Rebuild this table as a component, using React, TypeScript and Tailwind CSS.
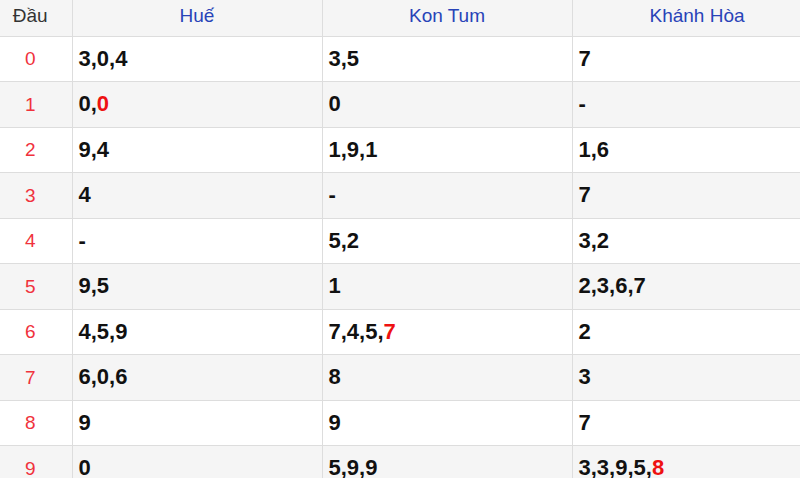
const rows: { head: string; cells: [string, string | null][] }[] = [
  { head: "0", cells: [["3,0,4", null], ["3,5", null], ["7", null]] },
  { head: "1", cells: [["0,", "0"], ["0", null], ["-", null]] },
  { head: "2", cells: [["9,4", null], ["1,9,1", null], ["1,6", null]] },
  { head: "3", cells: [["4", null], ["-", null], ["7", null]] },
  { head: "4", cells: [["-", null], ["5,2", null], ["3,2", null]] },
  { head: "5", cells: [["9,5", null], ["1", null], ["2,3,6,7", null]] },
  { head: "6", cells: [["4,5,9", null], ["7,4,5,", "7"], ["2", null]] },
  { head: "7", cells: [["6,0,6", null], ["8", null], ["3", null]] },
  { head: "8", cells: [["9", null], ["9", null], ["7", null]] },
  { head: "9", cells: [["0", null], ["5,9,9", null], ["3,3,9,5,", "8"]] },
];

const provinces = ["Huế", "Kon Tum", "Khánh Hòa"];

export default function App() {
  return (
    <div className="w-[800px] h-[478px] overflow-hidden bg-white font-['Liberation_Sans',Arial,sans-serif]">
      <table className="w-[822px] border-collapse table-fixed">
        <colgroup>
          <col className="w-[72px]" />
          <col className="w-[250px]" />
          <col className="w-[250px]" />
          <col className="w-[250px]" />
        </colgroup>
        <thead>
          <tr className="h-[36px] bg-[#f5f5f5]">
            <th className="border-r border-b border-[#dddddd] text-[19px] leading-none font-normal text-[#333] text-center pr-[11px] pb-[5px]">
              Đầu
            </th>
            {provinces.map((p) => (
              <th
                key={p}
                className="border-x border-b border-[#dddddd] text-[19px] leading-none font-normal text-[#2843b8] text-center pb-[5px]"
              >
                {p}
              </th>
            ))}
          </tr>
        </thead>
        <tbody>
          {rows.map((r, i) => (
            <tr
              key={r.head}
              className={
                (i % 2 === 1 ? "bg-[#f5f5f5] " : "bg-white ") +
                (i % 2 === 0 ? "h-[45px]" : "h-[46px]")
              }
            >
              <td className="border-r border-b border-[#dddddd] text-center pr-[11px] text-[19px] leading-none text-[#f0323c]">
                {r.head}
              </td>
              {r.cells.map(([txt, red], j) => (
                <td
                  key={j}
                  className="border-x border-b border-[#dddddd] pl-[6px] text-[22px] leading-none font-bold text-[#111]"
                >
                  {txt}
                  {red && <span className="text-[#ee1111]">{red}</span>}
                </td>
              ))}
            </tr>
          ))}
        </tbody>
      </table>
    </div>
  );
}
